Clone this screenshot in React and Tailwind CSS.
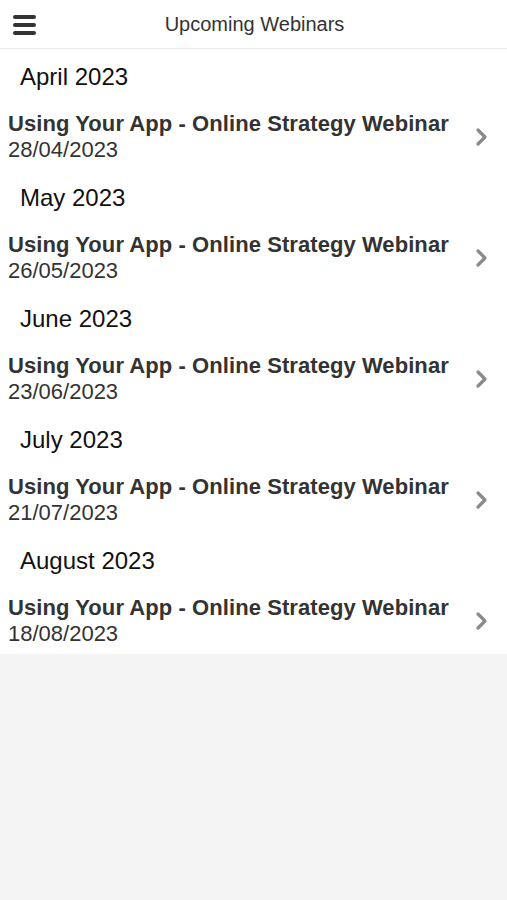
import React from 'react';

const webinars = [
  { month: 'April 2023', date: '28/04/2023' },
  { month: 'May 2023', date: '26/05/2023' },
  { month: 'June 2023', date: '23/06/2023' },
  { month: 'July 2023', date: '21/07/2023' },
  { month: 'August 2023', date: '18/08/2023' },
];

const Chevron = () => (
  <svg width="14" height="20" viewBox="0 0 14 20" className="shrink-0">
    <path d="M3 3 L10 10 L3 17" fill="none" stroke="#8a8a8a" strokeWidth="3.2" strokeLinecap="round" strokeLinejoin="round" />
  </svg>
);

const Header = () => (
  <header className="h-[49px] bg-white border-b border-[#ebebeb] flex items-center relative">
    <button className="absolute left-[13px] top-[15px] flex flex-col gap-[4px]">
      <span className="block w-[23px] h-[4px] rounded-sm bg-[#333]" />
      <span className="block w-[23px] h-[4px] rounded-sm bg-[#333]" />
      <span className="block w-[23px] h-[4px] rounded-sm bg-[#333]" />
    </button>
    <h1 className="w-full text-center text-[20px] text-[#333] pl-[2px]">Upcoming Webinars</h1>
  </header>
);

export default function App() {
  return (
    <div className="min-h-[900px] bg-[#f4f4f4]" style={{ fontFamily: '"Liberation Sans", Arial, sans-serif' }}>
      <Header />
      <div className="bg-white">
        {webinars.map((w) => (
          <section key={w.month}>
            <div className="h-[62px] pt-[10px] pl-[20px] text-[24px] leading-[36px] text-[#111]">{w.month}</div>
            <div className="h-[59px] pl-[8px] pr-[18px]">
              <div className="flex items-center justify-between h-[52px]">
                <div>
                  <div className="text-[22px] leading-[26px] font-bold tracking-[0.07px] text-[#333]">Using Your App - Online Strategy Webinar</div>
                  <div className="text-[22px] leading-[26px] text-[#333]">{w.date}</div>
                </div>
                <Chevron />
              </div>
            </div>
          </section>
        ))}
      </div>
    </div>
  );
}
